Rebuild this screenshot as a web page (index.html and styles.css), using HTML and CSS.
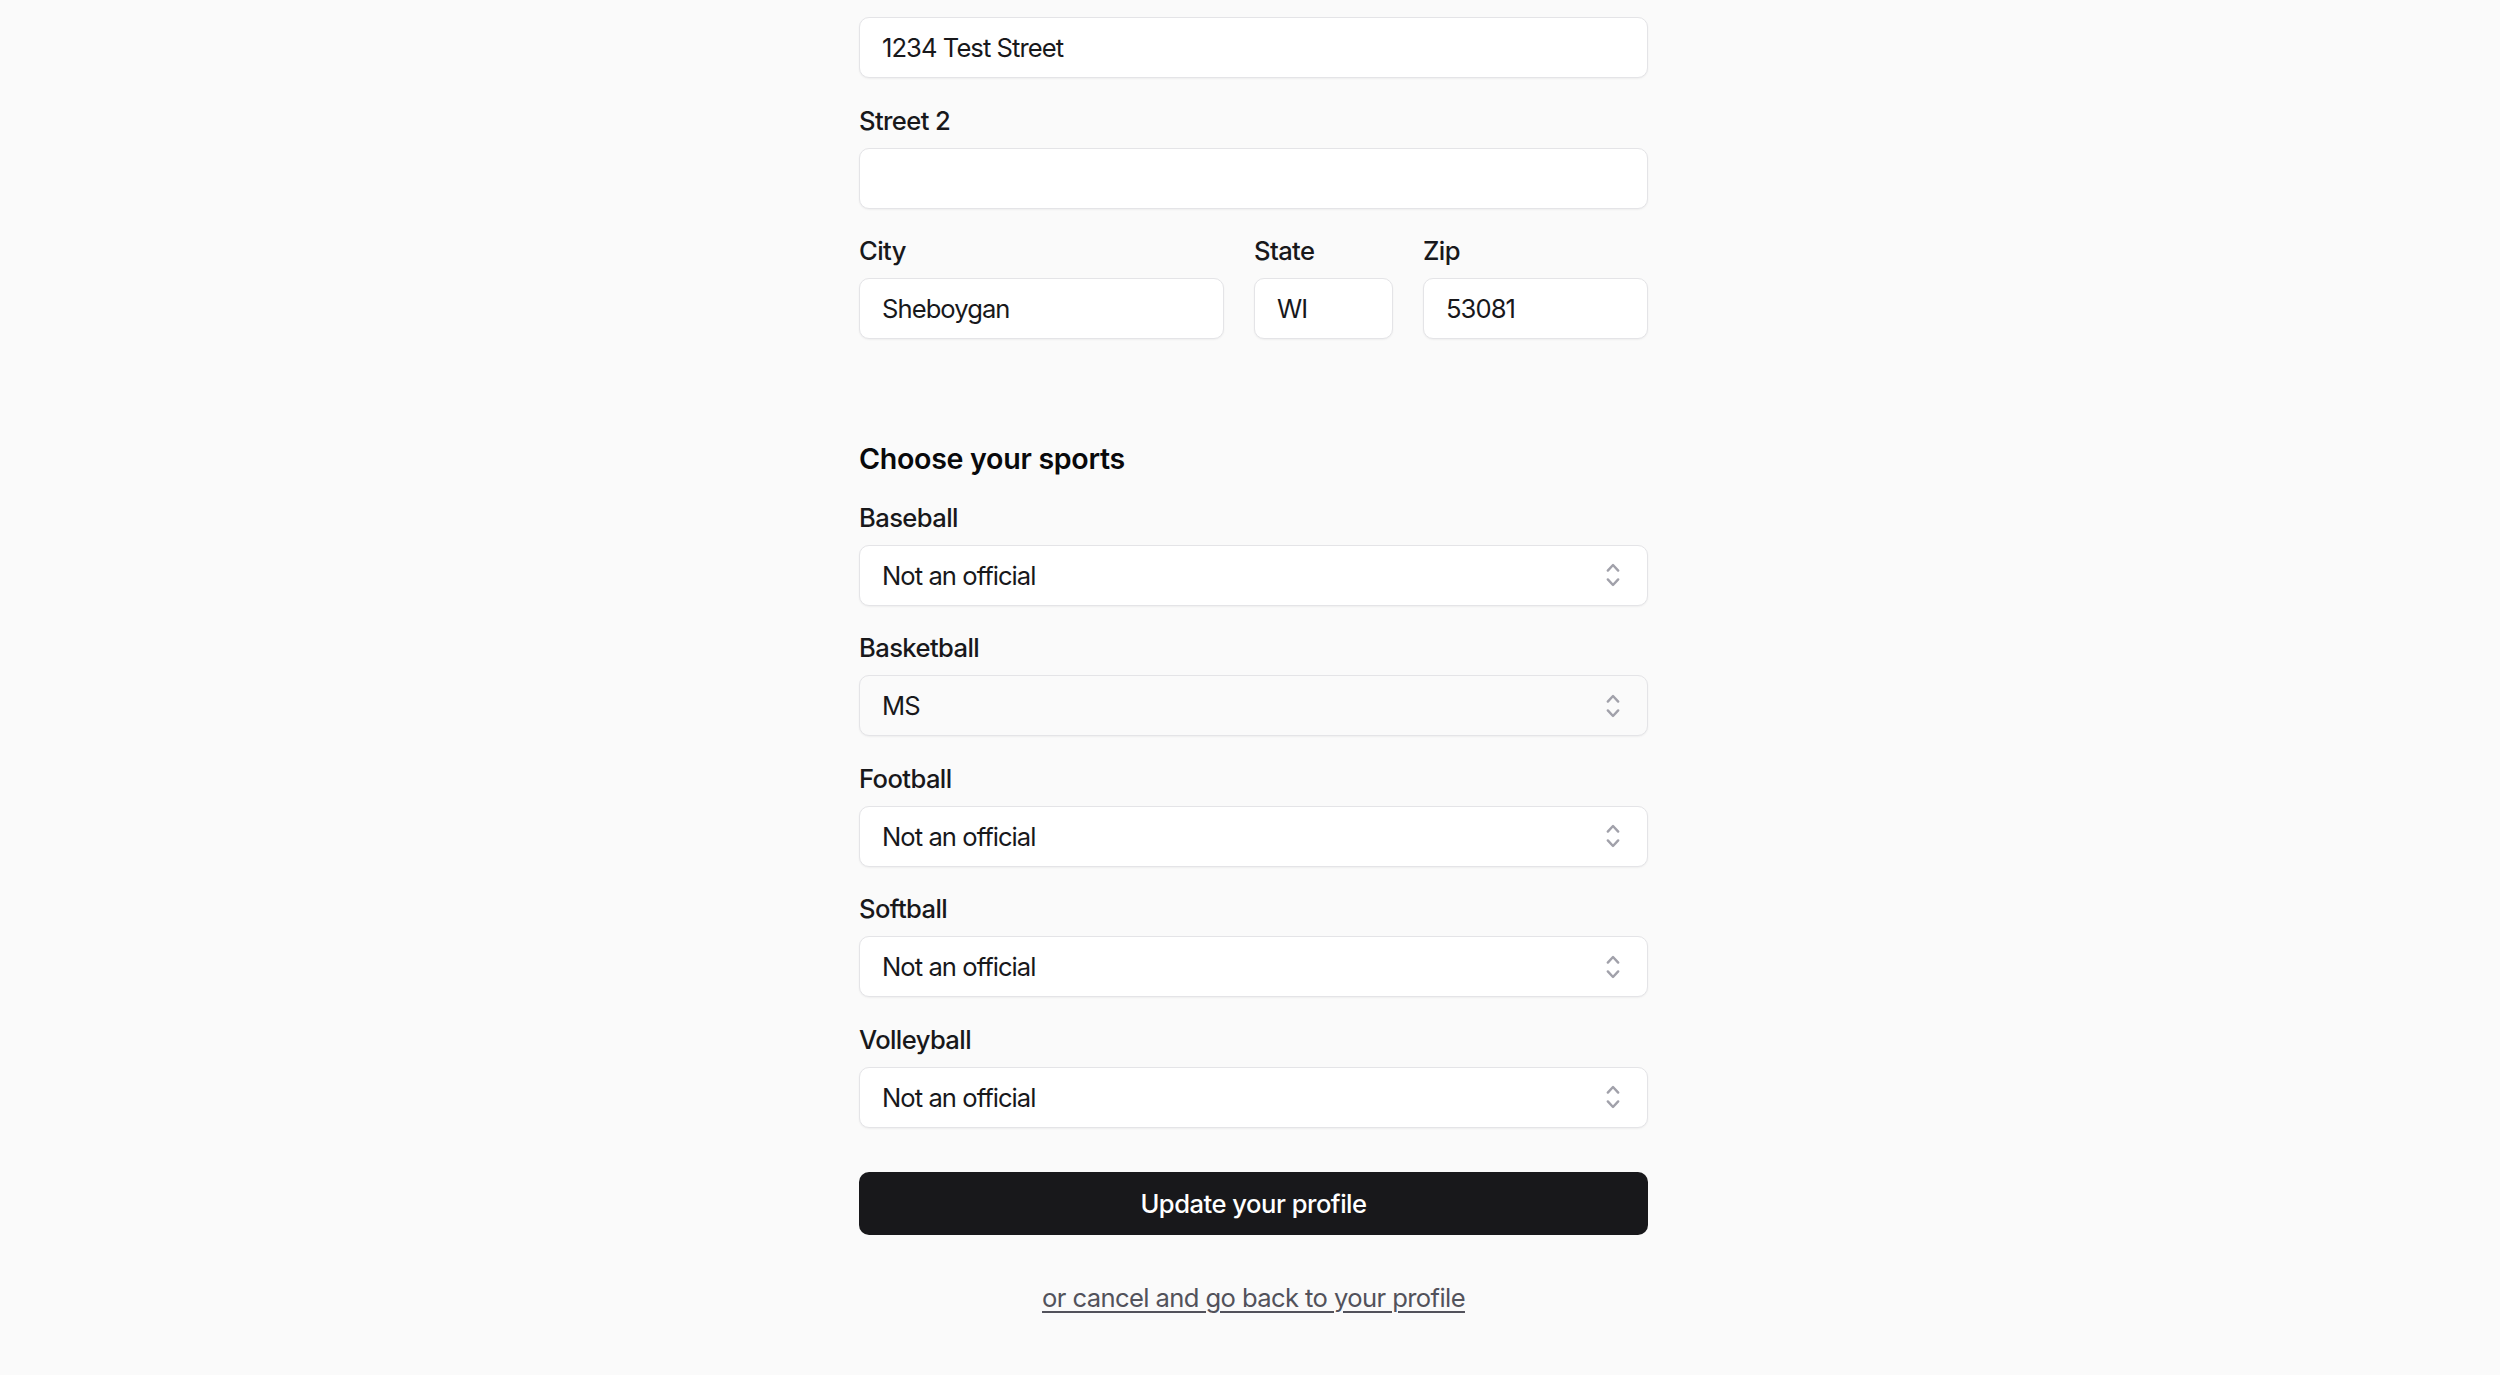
FILE: index.html
```html
<!DOCTYPE html>
<html lang="en">
<head>
<meta charset="utf-8">
<title>Update your profile</title>
<link rel="stylesheet" href="styles.css">
</head>
<body>
<div class="page">
  <form class="form">
    <div class="group">
      <div class="field">
        <input class="input" type="text" value="1234 Test Street">
      </div>
      <div class="field">
        <label class="label">Street 2</label>
        <input class="input" type="text" value="">
      </div>
      <div class="row">
        <div class="field city">
          <label class="label">City</label>
          <input class="input" type="text" value="Sheboygan">
        </div>
        <div class="field state">
          <label class="label">State</label>
          <input class="input" type="text" value="WI">
        </div>
        <div class="field zip">
          <label class="label">Zip</label>
          <input class="input" type="text" value="53081">
        </div>
      </div>
    </div>

    <h2 class="heading">Choose your sports</h2>
    <div class="group">
      <div class="field">
        <label class="label">Baseball</label>
        <div class="select-wrap">
          <select class="select"><option>Not an official</option></select>
          <svg class="chev" viewBox="0 0 20 20" fill="currentColor"><path fill-rule="evenodd" d="M10 3a.75.75 0 01.55.24l3.25 3.5a.75.75 0 11-1.1 1.02L10 4.852 7.3 7.76a.75.75 0 01-1.1-1.02l3.25-3.5A.75.75 0 0110 3zm-3.76 9.2a.75.75 0 011.06.04l2.7 2.908 2.7-2.908a.75.75 0 111.1 1.02l-3.25 3.5a.75.75 0 01-1.1 0l-3.25-3.5a.75.75 0 01.04-1.06z"/></svg>
        </div>
      </div>
      <div class="field">
        <label class="label">Basketball</label>
        <div class="select-wrap">
          <select class="select muted"><option>MS</option></select>
          <svg class="chev" viewBox="0 0 20 20" fill="currentColor"><path fill-rule="evenodd" d="M10 3a.75.75 0 01.55.24l3.25 3.5a.75.75 0 11-1.1 1.02L10 4.852 7.3 7.76a.75.75 0 01-1.1-1.02l3.25-3.5A.75.75 0 0110 3zm-3.76 9.2a.75.75 0 011.06.04l2.7 2.908 2.7-2.908a.75.75 0 111.1 1.02l-3.25 3.5a.75.75 0 01-1.1 0l-3.25-3.5a.75.75 0 01.04-1.06z"/></svg>
        </div>
      </div>
      <div class="field">
        <label class="label">Football</label>
        <div class="select-wrap">
          <select class="select"><option>Not an official</option></select>
          <svg class="chev" viewBox="0 0 20 20" fill="currentColor"><path fill-rule="evenodd" d="M10 3a.75.75 0 01.55.24l3.25 3.5a.75.75 0 11-1.1 1.02L10 4.852 7.3 7.76a.75.75 0 01-1.1-1.02l3.25-3.5A.75.75 0 0110 3zm-3.76 9.2a.75.75 0 011.06.04l2.7 2.908 2.7-2.908a.75.75 0 111.1 1.02l-3.25 3.5a.75.75 0 01-1.1 0l-3.25-3.5a.75.75 0 01.04-1.06z"/></svg>
        </div>
      </div>
      <div class="field">
        <label class="label">Softball</label>
        <div class="select-wrap">
          <select class="select"><option>Not an official</option></select>
          <svg class="chev" viewBox="0 0 20 20" fill="currentColor"><path fill-rule="evenodd" d="M10 3a.75.75 0 01.55.24l3.25 3.5a.75.75 0 11-1.1 1.02L10 4.852 7.3 7.76a.75.75 0 01-1.1-1.02l3.25-3.5A.75.75 0 0110 3zm-3.76 9.2a.75.75 0 011.06.04l2.7 2.908 2.7-2.908a.75.75 0 111.1 1.02l-3.25 3.5a.75.75 0 01-1.1 0l-3.25-3.5a.75.75 0 01.04-1.06z"/></svg>
        </div>
      </div>
      <div class="field">
        <label class="label">Volleyball</label>
        <div class="select-wrap">
          <select class="select"><option>Not an official</option></select>
          <svg class="chev" viewBox="0 0 20 20" fill="currentColor"><path fill-rule="evenodd" d="M10 3a.75.75 0 01.55.24l3.25 3.5a.75.75 0 11-1.1 1.02L10 4.852 7.3 7.76a.75.75 0 01-1.1-1.02l3.25-3.5A.75.75 0 0110 3zm-3.76 9.2a.75.75 0 011.06.04l2.7 2.908 2.7-2.908a.75.75 0 111.1 1.02l-3.25 3.5a.75.75 0 01-1.1 0l-3.25-3.5a.75.75 0 01.04-1.06z"/></svg>
        </div>
      </div>
    </div>

    <button class="button" type="button">Update your profile</button>
    <div class="cancel"><a class="cancel-link" href="#">or cancel and go back to your profile</a></div>
  </form>
</div>
</body>
</html>
```

FILE: styles.css
```css
html, body {
  margin: 0;
  padding: 0;
  background: #fafafa;
}

body {
  font-family: Inter, "Noto Sans", "Liberation Sans", sans-serif;
  color: #18181b;
  font-size: 25.6px;
}

.page {
  display: flex;
  justify-content: center;
  padding-left: 7px;
  padding-top: 17px;
}

.form {
  width: 789px;
  display: flex;
  flex-direction: column;
}

.group {
  display: flex;
  flex-direction: column;
  gap: 23.5px;
}

.row {
  display: flex;
  gap: 30px;
}

.city { width: 365px; }
.state { width: 139px; }
.zip { flex: 1; }

.field {
  display: flex;
  flex-direction: column;
  gap: 8px;
}

.label {
  font-size: 25.6px;
  line-height: 38px;
  font-weight: 500;
  letter-spacing: -0.6px;
  color: #18181b;
}

.input,
.select {
  box-sizing: border-box;
  width: 100%;
  height: 61px;
  margin: 0;
  padding: 0 22px;
  font-family: inherit;
  font-size: 25.6px;
  letter-spacing: -0.95px;
  color: #18181b;
  background: #ffffff;
  border: 1.5px solid #e4e4e7;
  border-radius: 10px;
  box-shadow: 0 1px 2px rgba(0, 0, 0, 0.05);
  outline: none;
}

.select {
  appearance: none;
  -webkit-appearance: none;
  padding-right: 60px;
}

.select.muted {
  background: #fafafa;
}

.select-wrap {
  position: relative;
}

.chev {
  position: absolute;
  right: 19px;
  top: 50%;
  width: 32px;
  height: 32px;
  margin-top: -16px;
  color: #a1a1aa;
  pointer-events: none;
}

.heading {
  margin: 99.5px 0 20px;
  font-size: 28.6px;
  line-height: 40px;
  font-weight: 600;
  letter-spacing: -0.3px;
  color: #09090b;
}

.button {
  margin-top: 44px;
  height: 63px;
  border: none;
  border-radius: 10px;
  background: #18181b;
  color: #ffffff;
  font-family: inherit;
  font-size: 25.6px;
  font-weight: 500;
  letter-spacing: -0.5px;
  cursor: pointer;
}

.cancel {
  margin-top: 44px;
  text-align: center;
  line-height: 38px;
}

.cancel-link {
  color: #52525b;
  font-size: 25.6px;
  letter-spacing: -0.6px;
  text-decoration: underline;
  text-underline-offset: 4px;
  text-decoration-thickness: 1.5px;
}
```
